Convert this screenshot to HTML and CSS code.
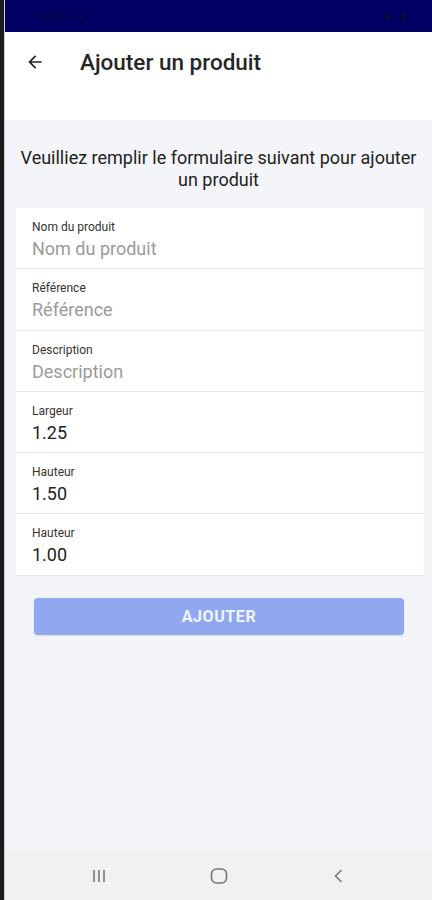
FILE: index.html
```html
<!doctype html>
<html lang="fr">
<head>
  <meta charset="utf-8"/>
  <title>Ajouter un produit</title>
  <link rel="stylesheet" href="styles.css">
</head>
<body>
<div class="bezel"></div>
<div class="screen">
  <div class="status-bar">
    <span class="status-left">12:00 ▪ ▪ ●</span>
    <span class="status-right">◆ ▪ ▮</span>
  </div>
  <div class="app-bar">
    <div class="app-bar-row">
      <svg class="back" width="20" height="20" viewBox="0 0 24 24">
        <path d="M20 11H7.83l5.59-5.59L12 4l-8 8 8 8 1.41-1.41L7.83 13H20v-2z" fill="#222"/>
      </svg>
      <h1 class="title">Ajouter un produit</h1>
    </div>
  </div>
  <div class="content">
    <p class="intro">Veuilliez remplir le formulaire suivant pour ajouter un produit</p>
    <div class="card">
      <div class="field">
        <label>Nom du produit</label>
        <div class="value placeholder">Nom du produit</div>
      </div>
      <div class="field">
        <label>Référence</label>
        <div class="value placeholder">Référence</div>
      </div>
      <div class="field">
        <label>Description</label>
        <div class="value placeholder">Description</div>
      </div>
      <div class="field">
        <label>Largeur</label>
        <div class="value">1.25</div>
      </div>
      <div class="field">
        <label>Hauteur</label>
        <div class="value">1.50</div>
      </div>
      <div class="field">
        <label>Hauteur</label>
        <div class="value">1.00</div>
      </div>
    </div>
    <button class="submit" disabled>AJOUTER</button>
  </div>
  <div class="nav-bar">
    <svg width="20" height="20" viewBox="0 0 20 20">
      <g stroke="#777" stroke-width="1.6">
        <line x1="5" y1="4" x2="5" y2="16"/>
        <line x1="10" y1="4" x2="10" y2="16"/>
        <line x1="15" y1="4" x2="15" y2="16"/>
      </g>
    </svg>
    <svg width="20" height="20" viewBox="0 0 20 20">
      <rect x="2.5" y="3" width="15" height="14" rx="5" fill="none" stroke="#777" stroke-width="1.6"/>
    </svg>
    <svg width="20" height="20" viewBox="0 0 20 20">
      <path d="M12.5 4 L6.5 10 L12.5 16" fill="none" stroke="#777" stroke-width="1.6"/>
    </svg>
  </div>
</div>
</body>
</html>
```

FILE: styles.css
```css
html, body {
  margin: 0;
  height: 100%;
}
body {
  display: flex;
  font-family: Roboto, "Noto Sans", Arial, sans-serif;
  background: #1c1c1c;
}
.bezel {
  width: 4px;
  background: #1c1c1c;
  border-right: 1px solid #cfd0d4;
}
.screen {
  flex: 1;
  display: flex;
  flex-direction: column;
  height: 900px;
  background: #f4f5f9;
}
.status-bar {
  height: 32px;
  background: #000062;
  display: flex;
  align-items: center;
  justify-content: space-between;
  padding: 0 26px 0 30px;
  font-size: 11px;
  color: #0a0a40;
}
.app-bar {
  height: 88px;
  background: #fff;
}
.app-bar-row {
  height: 60px;
  display: flex;
  align-items: center;
  padding-left: 20px;
}
.back {
  flex: none;
}
.title {
  margin: 0 0 0 35px;
  font-size: 22.5px;
  font-weight: 500;
  color: #262626;
}
.content {
  flex: 1;
  display: flex;
  flex-direction: column;
}
.intro {
  margin: 27px 10px 17px 10px;
  text-align: center;
  font-size: 18px;
  line-height: 22px;
  color: #222;
}
.card {
  margin: 0 8px 0 11px;
  background: #fff;
}
.field {
  height: 61.3px;
  box-sizing: border-box;
  padding: 11px 16px 0;
  border-bottom: 1px solid #e8e9ed;
}
.field label {
  display: block;
  font-size: 12px;
  line-height: 16px;
  color: #333;
}
.value {
  font-size: 18px;
  line-height: 27px;
  color: #222;
}
.placeholder {
  color: #9a9a9a;
}
.submit {
  margin: 22px 28px 0 29px;
  height: 37px;
  border: none;
  border-radius: 4px;
  background: #8fa8f0;
  color: #f2f4fd;
  font-family: Roboto, Arial, sans-serif;
  font-size: 16px;
  font-weight: 700;
  letter-spacing: 0.6px;
  box-shadow: 0 1px 2px rgba(0, 0, 0, 0.12);
}
.nav-bar {
  height: 49px;
  background: #f1f1f1;
  display: flex;
  align-items: center;
  gap: 100px;
  padding-left: 84px;
}
```
